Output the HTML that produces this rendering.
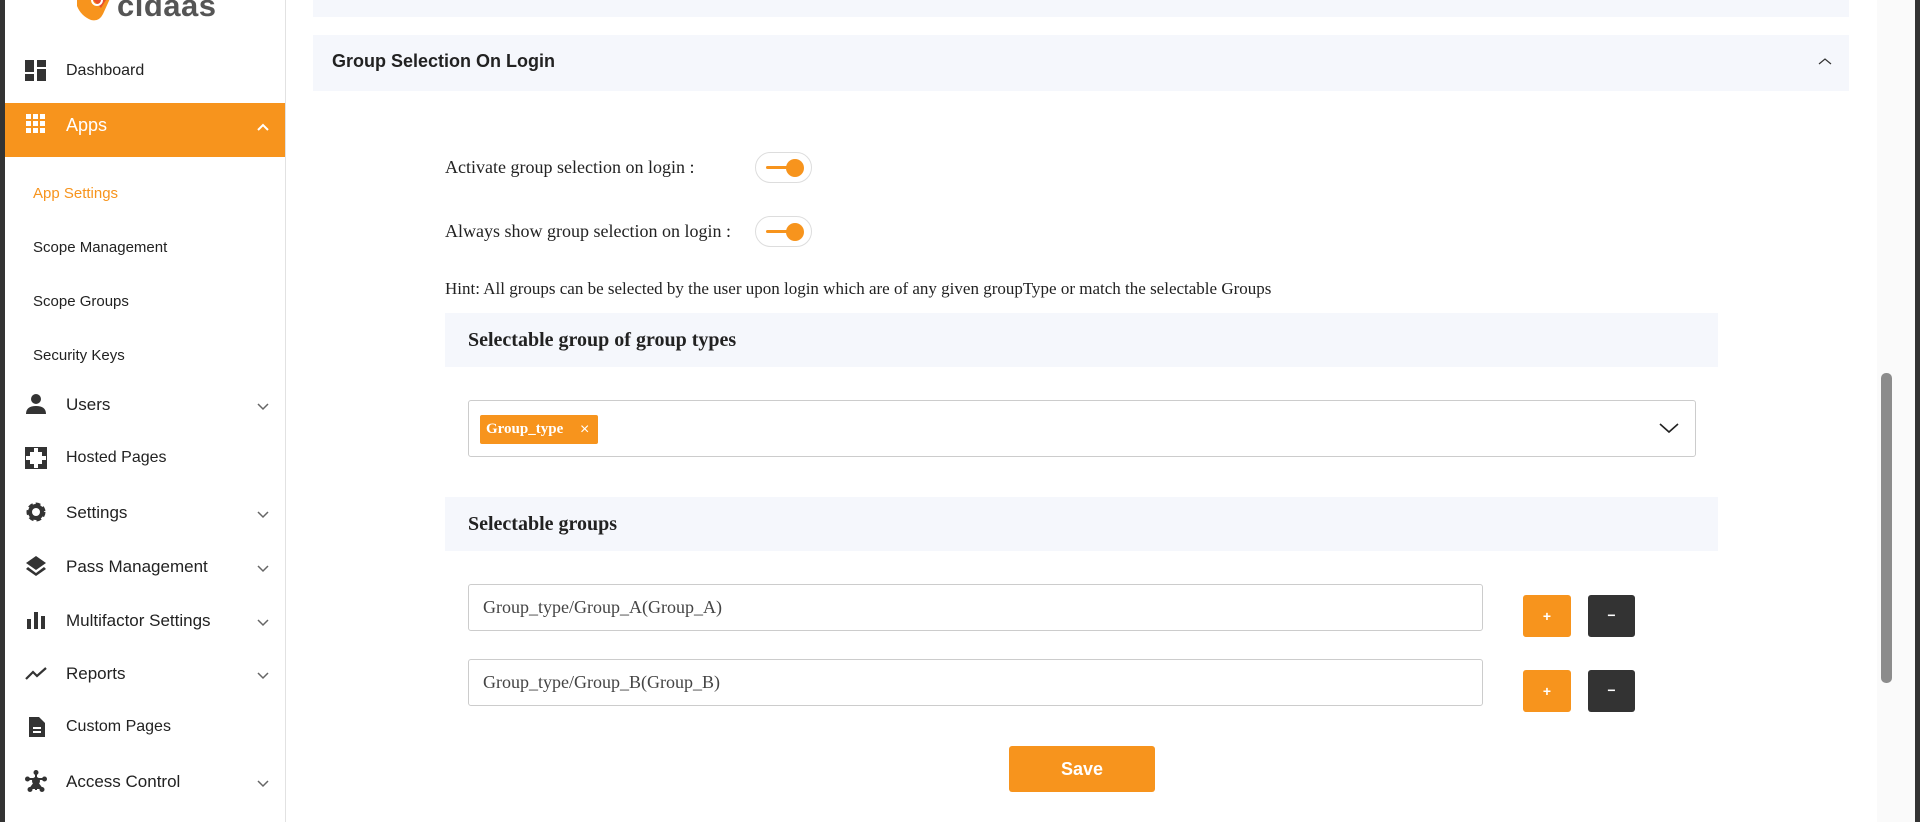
<!DOCTYPE html>
<html><head><meta charset="utf-8"><style>
*{box-sizing:border-box;margin:0;padding:0}
body{width:1920px;height:822px;overflow:hidden;background:#fff;font-family:"Liberation Sans",sans-serif;position:relative}
.abs{position:absolute}
.strip{left:0;top:0;width:5px;height:822px;background:#333}
.side{left:5px;top:0;width:281px;height:822px;border-right:1px solid #e2e2e2;background:#fff}
.mi{position:absolute;left:0;width:280px;font-size:16px;color:#222}
.mi .ic{position:absolute;left:20px;top:-2px;width:22px;height:22px}
.mi .tx{position:absolute;left:61px;top:0}
.mi .ch{position:absolute;left:252px;top:8px;width:12px;height:8px}
.sub{position:absolute;left:28px;font-size:15px;color:#222}
.card{background:#f5f7fc}
.lbl{font-family:"Liberation Serif",serif;font-size:18px;color:#222}
.tog{width:57px;height:31px;border:1px solid #ddd;border-radius:16px;background:#fff}
.tog:before{content:"";position:absolute;left:10px;top:13px;width:26px;height:3px;background:#f7941d;border-radius:2px}
.tog:after{content:"";position:absolute;left:30px;top:6px;width:18px;height:18px;background:#f7941d;border-radius:50%}
.sec{background:#f5f7fc;font-family:"Liberation Serif",serif;font-weight:bold;font-size:20px;color:#222;padding-left:23px}
.inp{border:1px solid #ccc;border-radius:3px;background:#fff;font-family:"Liberation Serif",serif;font-size:18px;color:#444;padding-left:14px}
.btn{border-radius:3px;color:#fff;font-weight:bold;font-size:14px;text-align:center}
</style></head><body>
<div class="abs strip"></div>
<div class="abs side">
  <svg class="abs" style="left:68px;top:-8px" width="46" height="36" viewBox="0 0 46 36"><path d="M4 0 L40 0 L30 22 Q26 30 18 28 Q8 24 4 14 Z" fill="#f7941d"/><path d="M12 0 L38 0 L28 16 Z" fill="#e8502a"/><circle cx="24" cy="8" r="5" fill="none" stroke="#fff" stroke-width="2"/></svg>
  <div class="abs" style="left:112px;top:-12px;font-size:31px;font-weight:bold;color:#555;letter-spacing:0.5px">cidaas</div>
  <div class="mi" style="top:62px"><svg class="ic" viewBox="0 0 22 22"><rect x="0" y="0" width="9" height="12" fill="#333"/><rect x="12" y="0" width="9" height="7" fill="#333"/><rect x="12" y="9" width="9" height="12" fill="#333"/><rect x="0" y="14" width="9" height="7" fill="#333"/></svg><span class="tx">Dashboard</span></div>
  <div class="abs" style="left:0;top:103px;width:280px;height:54px;background:#f7941d"></div>
  <div class="mi" style="top:115px;color:#fff;font-size:18px"><svg class="ic" viewBox="0 0 22 22" fill="#fff"><rect x="1" y="1" width="5" height="5"/><rect x="8" y="1" width="5" height="5"/><rect x="15" y="1" width="5" height="5"/><rect x="1" y="8" width="5" height="5"/><rect x="8" y="8" width="5" height="5"/><rect x="15" y="8" width="5" height="5"/><rect x="1" y="15" width="5" height="5"/><rect x="8" y="15" width="5" height="5"/><rect x="15" y="15" width="5" height="5"/></svg><span class="tx">Apps</span><svg class="ch" viewBox="0 0 12 8"><path d="M1 7 L6 2 L11 7" fill="none" stroke="#fff" stroke-width="2"/></svg></div>
  <div class="sub" style="top:185px;color:#f7941d">App Settings</div>
  <div class="sub" style="top:239px">Scope Management</div>
  <div class="sub" style="top:293px">Scope Groups</div>
  <div class="sub" style="top:347px">Security Keys</div>
  <div class="mi" style="top:395px;font-size:17px"><svg class="ic" viewBox="0 0 22 22" fill="#333"><circle cx="11" cy="6" r="5"/><path d="M1 21 Q1 13 11 13 Q21 13 21 21Z"/></svg><span class="tx">Users</span><svg class="ch" viewBox="0 0 12 8"><path d="M1 1 L6 6 L11 1" fill="none" stroke="#666" stroke-width="1.5"/></svg></div>
  <div class="mi" style="top:449px"><svg class="ic" viewBox="0 0 22 22" fill="#333"><path d="M1 1h8v4H5v4H1zM13 1h8v8h-4V5h-4zM1 13h4v4h4v4H1zM17 13h4v8h-8v-4h4z"/><rect x="0" y="0" width="22" height="22" fill="none" stroke="#333" stroke-width="2"/></svg><span class="tx">Hosted Pages</span></div>
  <div class="mi" style="top:503px;font-size:17px"><svg class="ic" viewBox="0 0 22 22"><circle cx="11" cy="11" r="7" fill="none" stroke="#333" stroke-width="5" stroke-dasharray="4 2.5"/><circle cx="11" cy="11" r="6" fill="none" stroke="#333" stroke-width="4"/></svg><span class="tx">Settings</span><svg class="ch" viewBox="0 0 12 8"><path d="M1 1 L6 6 L11 1" fill="none" stroke="#666" stroke-width="1.5"/></svg></div>
  <div class="mi" style="top:557px;font-size:17px"><svg class="ic" viewBox="0 0 22 22" fill="#333"><path d="M11 1 L21 8 L11 15 L1 8Z"/><path d="M3 12 L11 18 L19 12 L21 14 L11 21 L1 14Z"/></svg><span class="tx">Pass Management</span><svg class="ch" viewBox="0 0 12 8"><path d="M1 1 L6 6 L11 1" fill="none" stroke="#666" stroke-width="1.5"/></svg></div>
  <div class="mi" style="top:611px;font-size:17px"><svg class="ic" viewBox="0 0 22 22" fill="#333"><rect x="2" y="10" width="4" height="10"/><rect x="9" y="3" width="4" height="17"/><rect x="16" y="7" width="4" height="13"/></svg><span class="tx">Multifactor Settings</span><svg class="ch" viewBox="0 0 12 8"><path d="M1 1 L6 6 L11 1" fill="none" stroke="#666" stroke-width="1.5"/></svg></div>
  <div class="mi" style="top:664px;font-size:17px"><svg class="ic" viewBox="0 0 22 22"><path d="M1 17 L8 10 L12 14 L21 6" fill="none" stroke="#333" stroke-width="2.2"/></svg><span class="tx">Reports</span><svg class="ch" viewBox="0 0 12 8"><path d="M1 1 L6 6 L11 1" fill="none" stroke="#666" stroke-width="1.5"/></svg></div>
  <div class="mi" style="top:718px"><svg class="ic" viewBox="0 0 22 22"><path d="M4 1h10l6 6v14H4z" fill="#333"/><rect x="8" y="11" width="8" height="2" fill="#fff"/><rect x="8" y="15" width="8" height="2" fill="#fff"/></svg><span class="tx">Custom Pages</span></div>
  <div class="mi" style="top:772px;font-size:17px"><svg class="ic" viewBox="0 0 22 22" fill="#333"><path d="M11 2 L11 20 M2 9 L20 9 M5 19 L11 11 L17 19" stroke="#333" stroke-width="2"/><circle cx="11" cy="11" r="4"/><circle cx="11" cy="2.5" r="2.5"/><circle cx="2.5" cy="9" r="2.5"/><circle cx="19.5" cy="9" r="2.5"/><circle cx="5" cy="19.5" r="2.5"/><circle cx="17" cy="19.5" r="2.5"/></svg><span class="tx">Access Control</span><svg class="ch" viewBox="0 0 12 8"><path d="M1 1 L6 6 L11 1" fill="none" stroke="#666" stroke-width="1.5"/></svg></div>
</div>

<div class="abs card" style="left:313px;top:0;width:1536px;height:17px"></div>
<div class="abs card" style="left:313px;top:35px;width:1536px;height:56px"></div>
<div class="abs" style="left:332px;top:51px;font-size:18px;font-weight:bold;color:#222">Group Selection On Login</div>
<svg class="abs" style="left:1818px;top:57px" width="14" height="8" viewBox="0 0 14 8"><path d="M1 7 L7 2 L13 7" fill="none" stroke="#333" stroke-width="1.2"/></svg>

<div class="abs lbl" style="left:445px;top:157px">Activate group selection on login :</div>
<div class="abs tog" style="left:755px;top:152px"></div>
<div class="abs lbl" style="left:445px;top:221px">Always show group selection on login :</div>
<div class="abs tog" style="left:755px;top:216px"></div>
<div class="abs lbl" style="left:445px;top:279px;font-size:17px">Hint: All groups can be selected by the user upon login which are of any given groupType or match the selectable Groups</div>

<div class="abs sec" style="left:445px;top:313px;width:1273px;height:54px;line-height:54px">Selectable group of group types</div>
<div class="abs inp" style="left:468px;top:400px;width:1228px;height:57px"></div>
<div class="abs" style="left:480px;top:415px;width:118px;height:29px;background:#f7941d;border-radius:2px;color:#fff;font-family:'Liberation Serif',serif;font-weight:bold;font-size:15px;line-height:29px;padding-left:6px">Group_type<span style="position:absolute;left:100px;font-weight:normal;font-family:'Liberation Sans',sans-serif;font-size:16px">×</span></div>
<svg class="abs" style="left:1659px;top:422px" width="20" height="12" viewBox="0 0 20 12"><path d="M1 2 L10 10 L19 2" fill="none" stroke="#222" stroke-width="1.6"/></svg>

<div class="abs sec" style="left:445px;top:497px;width:1273px;height:54px;line-height:54px">Selectable groups</div>
<div class="abs inp" style="left:468px;top:584px;width:1015px;height:47px;line-height:45px">Group_type/Group_A(Group_A)</div>
<div class="abs inp" style="left:468px;top:659px;width:1015px;height:47px;line-height:45px">Group_type/Group_B(Group_B)</div>
<div class="abs btn" style="left:1523px;top:595px;width:48px;height:42px;line-height:42px;background:#f7941d">+</div>
<div class="abs btn" style="left:1588px;top:595px;width:47px;height:42px;line-height:40px;background:#333">−</div>
<div class="abs btn" style="left:1523px;top:670px;width:48px;height:42px;line-height:42px;background:#f7941d">+</div>
<div class="abs btn" style="left:1588px;top:670px;width:47px;height:42px;line-height:40px;background:#333">−</div>

<div class="abs" style="left:1009px;top:746px;width:146px;height:46px;background:#f7941d;border-radius:3px;color:#fff;font-size:18px;font-weight:bold;text-align:center;line-height:46px">Save</div>

<div class="abs" style="left:1877px;top:0;width:38px;height:822px;background:#fafafa"></div>
<div class="abs" style="left:1881px;top:373px;width:11px;height:310px;background:#8c8c8c;border-radius:5px"></div>
<div class="abs" style="left:1915px;top:0;width:5px;height:822px;background:#333"></div>
</body></html>
